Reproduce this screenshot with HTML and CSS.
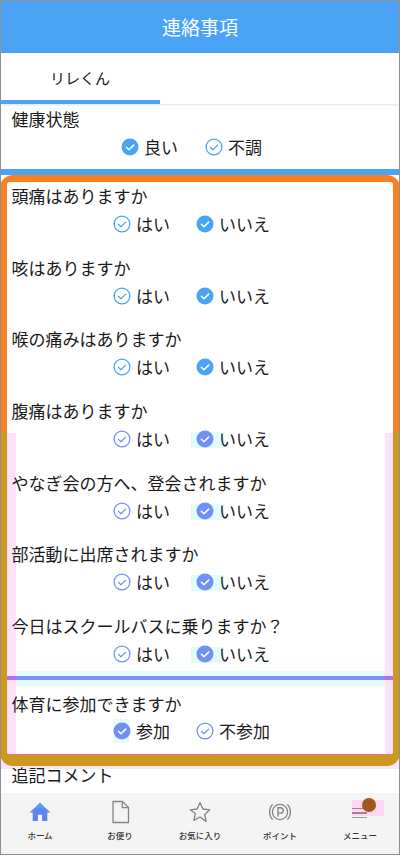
FILE: index.html
```html
<!DOCTYPE html>
<html lang="ja">
<head>
<meta charset="utf-8">
<title>連絡事項</title>
<link rel="stylesheet" href="styles.css">
</head>
<body>
<svg class="defs" width="0" height="0" aria-hidden="true">
  <symbol id="on" viewBox="0 0 18 18"><circle cx="9" cy="9" r="8.5" fill="currentColor"/><path d="M5.4 9.3l2.5 2.4 4.8-4.6" fill="none" stroke="#fff" stroke-width="1.5" stroke-linecap="round" stroke-linejoin="round"/></symbol>
  <symbol id="off" viewBox="0 0 18 18"><circle cx="9" cy="9" r="7.9" fill="none" stroke="currentColor" stroke-width="1.3"/><path d="M5.4 9.3l2.5 2.4 4.8-4.6" fill="none" stroke="currentColor" stroke-width="1.2" stroke-linecap="round" stroke-linejoin="round"/></symbol>
</svg>
<div class="page">
  <header class="title">連絡事項</header>
  <nav class="tabs"><div class="tab">リレくん</div></nav>
  <main class="main">
    <section class="health">
      <div class="label">健康状態</div>
      <div class="opts">
        <div class="opt"><svg class="ic"><use href="#on"/></svg><span>良い</span></div>
        <div class="opt"><svg class="ic"><use href="#off"/></svg><span>不調</span></div>
      </div>
    </section>
    <div class="card-wrap">
      <div class="card">
        <div class="panel">
          <section class="row">
            <div class="label">頭痛はありますか</div>
            <div class="opts">
              <div class="opt"><svg class="ic"><use href="#off"/></svg><span>はい</span></div>
              <div class="opt"><svg class="ic"><use href="#on"/></svg><span>いいえ</span></div>
            </div>
          </section>
          <section class="row">
            <div class="label">咳はありますか</div>
            <div class="opts">
              <div class="opt"><svg class="ic"><use href="#off"/></svg><span>はい</span></div>
              <div class="opt"><svg class="ic"><use href="#on"/></svg><span>いいえ</span></div>
            </div>
          </section>
          <section class="row">
            <div class="label">喉の痛みはありますか</div>
            <div class="opts">
              <div class="opt"><svg class="ic"><use href="#off"/></svg><span>はい</span></div>
              <div class="opt"><svg class="ic"><use href="#on"/></svg><span>いいえ</span></div>
            </div>
          </section>
          <section class="row tint">
            <div class="label">腹痛はありますか</div>
            <div class="opts">
              <div class="opt"><svg class="ic"><use href="#off"/></svg><span>はい</span></div>
              <div class="opt sel"><svg class="ic"><use href="#on"/></svg><span>いいえ</span></div>
            </div>
          </section>
          <section class="row tint">
            <div class="label">やなぎ会の方へ、登会されますか</div>
            <div class="opts">
              <div class="opt"><svg class="ic"><use href="#off"/></svg><span>はい</span></div>
              <div class="opt sel"><svg class="ic"><use href="#on"/></svg><span>いいえ</span></div>
            </div>
          </section>
          <section class="row tint">
            <div class="label">部活動に出席されますか</div>
            <div class="opts">
              <div class="opt"><svg class="ic"><use href="#off"/></svg><span>はい</span></div>
              <div class="opt sel"><svg class="ic"><use href="#on"/></svg><span>いいえ</span></div>
            </div>
          </section>
          <section class="row tint">
            <div class="label">今日はスクールバスに乗りますか？</div>
            <div class="opts">
              <div class="opt"><svg class="ic"><use href="#off"/></svg><span>はい</span></div>
              <div class="opt sel"><svg class="ic"><use href="#on"/></svg><span>いいえ</span></div>
            </div>
          </section>
          <div class="divider"></div>
          <section class="row tint last">
            <div class="label">体育に参加できますか</div>
            <div class="opts">
              <div class="opt sel-first"><svg class="ic"><use href="#on"/></svg><span>参加</span></div>
              <div class="opt"><svg class="ic"><use href="#off"/></svg><span>不参加</span></div>
            </div>
          </section>
        </div>
      </div>
    </div>
    <div class="label note">追記コメント</div>
  </main>
  <footer class="nav">
    <div class="item">
      <svg class="nav-ic home" viewBox="0 0 24 24"><defs><linearGradient id="homefill" x1="0" y1="0" x2="0" y2="1"><stop offset="0.28" stop-color="#4aa3f5"/><stop offset="0.28" stop-color="#5f86e6"/></linearGradient></defs><path d="M12 2.6L1.6 12.4h3.1V21h5.2v-6.2h4.2V21h5.2v-8.6h3.1z" fill="url(#homefill)"/></svg>
      <span>ホーム</span>
    </div>
    <div class="item">
      <svg class="nav-ic" viewBox="0 0 24 24"><path d="M5 1.5h9.5L20.5 7.5V22.5H5z M14.3 1.7V7.7H20.3" fill="none" stroke="#858585" stroke-width="1.3" stroke-linejoin="round"/></svg>
      <span>お便り</span>
    </div>
    <div class="item">
      <svg class="nav-ic" viewBox="0 0 24 24"><path d="M12 2.6l2.9 6.4 6.9.8-5.1 4.7 1.4 6.9L12 17l-6.1 3.4 1.4-6.9L2.2 9.8l6.9-.8z" fill="none" stroke="#858585" stroke-width="1.3" stroke-linejoin="round"/></svg>
      <span>お気に入り</span>
    </div>
    <div class="item">
      <svg class="nav-ic" viewBox="0 0 24 24"><circle cx="12" cy="12" r="7.6" fill="none" stroke="#858585" stroke-width="1.3"/><path d="M4.6 4.4a11 11 0 0 0 0 15.2M19.4 4.4a11 11 0 0 1 0 15.2" fill="none" stroke="#858585" stroke-width="1.3"/><path d="M10 16.4V7.8h2.6a2.6 2.6 0 0 1 0 5.3H10" fill="none" stroke="#858585" stroke-width="1.4"/></svg>
      <span>ポイント</span>
    </div>
    <div class="item menu">
      <div class="menu-ic">
        <i class="bar"></i><i class="bar"></i><i class="bar"></i>
        <b class="dot"></b>
      </div>
      <span>メニュー</span>
    </div>
  </footer>
</div>
</body>
</html>
```

FILE: styles.css
```css
* { box-sizing: border-box; }
html, body { margin: 0; padding: 0; }
body { background: #fff; font-family: "Noto Sans CJK JP", "Noto Sans", sans-serif; color: #1a1a1a; }
.defs { position: absolute; }
.page { position: relative; width: 400px; height: 855px; overflow: hidden; display: flex; flex-direction: column; background: #fff; }
.page::after { content: ""; position: absolute; inset: 0; border: 1px solid #8f8f8f; pointer-events: none; }

.title { height: 53px; flex: none; background: #4aa3f5; color: #fff; font-size: 19px; line-height: 53px; text-align: center; }

.tabs { height: 51px; flex: none; box-shadow: 0 1px 2px rgba(0,0,0,.12); position: relative; }
.tab { width: 160px; height: 51px; font-size: 15px; text-align: center; border-bottom: 4px solid #4aa3f5; line-height: 50px; }

.main { flex: 1; min-height: 0; overflow: hidden; }

.label { font-size: 17px; line-height: 24px; padding-left: 11.5px; white-space: nowrap; }
.health { height: 71px; padding-top: 3px; border-bottom: 6px solid #4aa3f5; }
.opts { display: flex; justify-content: center; gap: 27px; height: 24px; margin-top: 4px; padding-right: 17px; }
.opt { position: relative; z-index: 0; display: flex; align-items: center; gap: 5px; font-size: 17px; line-height: 24px; }
.ic { width: 18px; height: 18px; color: #4aa3f5; flex: none; }

.card-wrap { background: linear-gradient(#fde2fb, #fde2fb) left bottom / 100% 15px no-repeat; padding-bottom: 3px; }
.card { background: linear-gradient(#fb8020 257px, #cc991c 257px); padding: 7px 7px 11px; border-radius: 13px; }
.panel {
  background:
    linear-gradient(#fde2fb, #fde2fb) left bottom / 9px 321px no-repeat,
    linear-gradient(#fde2fb, #fde2fb) right bottom / 8px 321px no-repeat,
    #fff;
  border-radius: 3px;
  border-bottom: 1px solid #e070b0;
}
.row { height: 71.67px; padding-top: 2px; }
.row .label { margin-left: -7px; }
.row .opts { gap: 26px; }
.tint .ic { color: #6f90f5; }
.sel::before { content: ""; position: absolute; z-index: -1; left: -5px; top: 5px; width: 33px; height: 16px; background: #e2fbfb; }
.sel-first::before { content: ""; position: absolute; z-index: -1; left: 0; top: 0; width: 16px; height: 24px; background: #e2fbfb; }
.divider { height: 4px; margin: -8px 0 8px; background: linear-gradient(90deg, #b070f0 9px, #7f8ff7 9px, #7f8ff7 377px, #b070f0 377px); position: relative; }
.divider::before { content: ""; position: absolute; left: 9px; right: 8px; top: -5px; bottom: -6px; z-index: 0; border-top: 5px solid #e2fbfb; border-bottom: 6px solid #e2fbfb; }
.last { height: 66px; padding-top: 4px; }
.last .opts { margin-top: 3px; }

.note { margin-top: -6px; }

.nav { height: 62px; flex: none; background: #f4f4f4; display: grid; grid-template-columns: repeat(5, 80px); }
.item { display: flex; flex-direction: column; align-items: center; padding-top: 7px; font-size: 8.5px; font-weight: 500; line-height: 12px; color: #333; }
.nav-ic { width: 24px; height: 24px; display: block; margin-bottom: 5px; }
.menu-ic { position: relative; width: 32px; height: 24px; margin-left: 16px; display: flex; flex-direction: column; justify-content: flex-end; gap: 3px; padding-bottom: 6px; margin-bottom: 5px; background: linear-gradient(#fcd6f3, #fcd6f3) left top / 32px 16px no-repeat; }
.bar { display: block; width: 15px; height: 1.5px; background: #a08098; }
.bar:last-of-type { background: #9a9a9a; }
.dot { position: absolute; left: 10px; top: -2px; width: 14px; height: 14px; border-radius: 50%; background: #a0581f; }
```
